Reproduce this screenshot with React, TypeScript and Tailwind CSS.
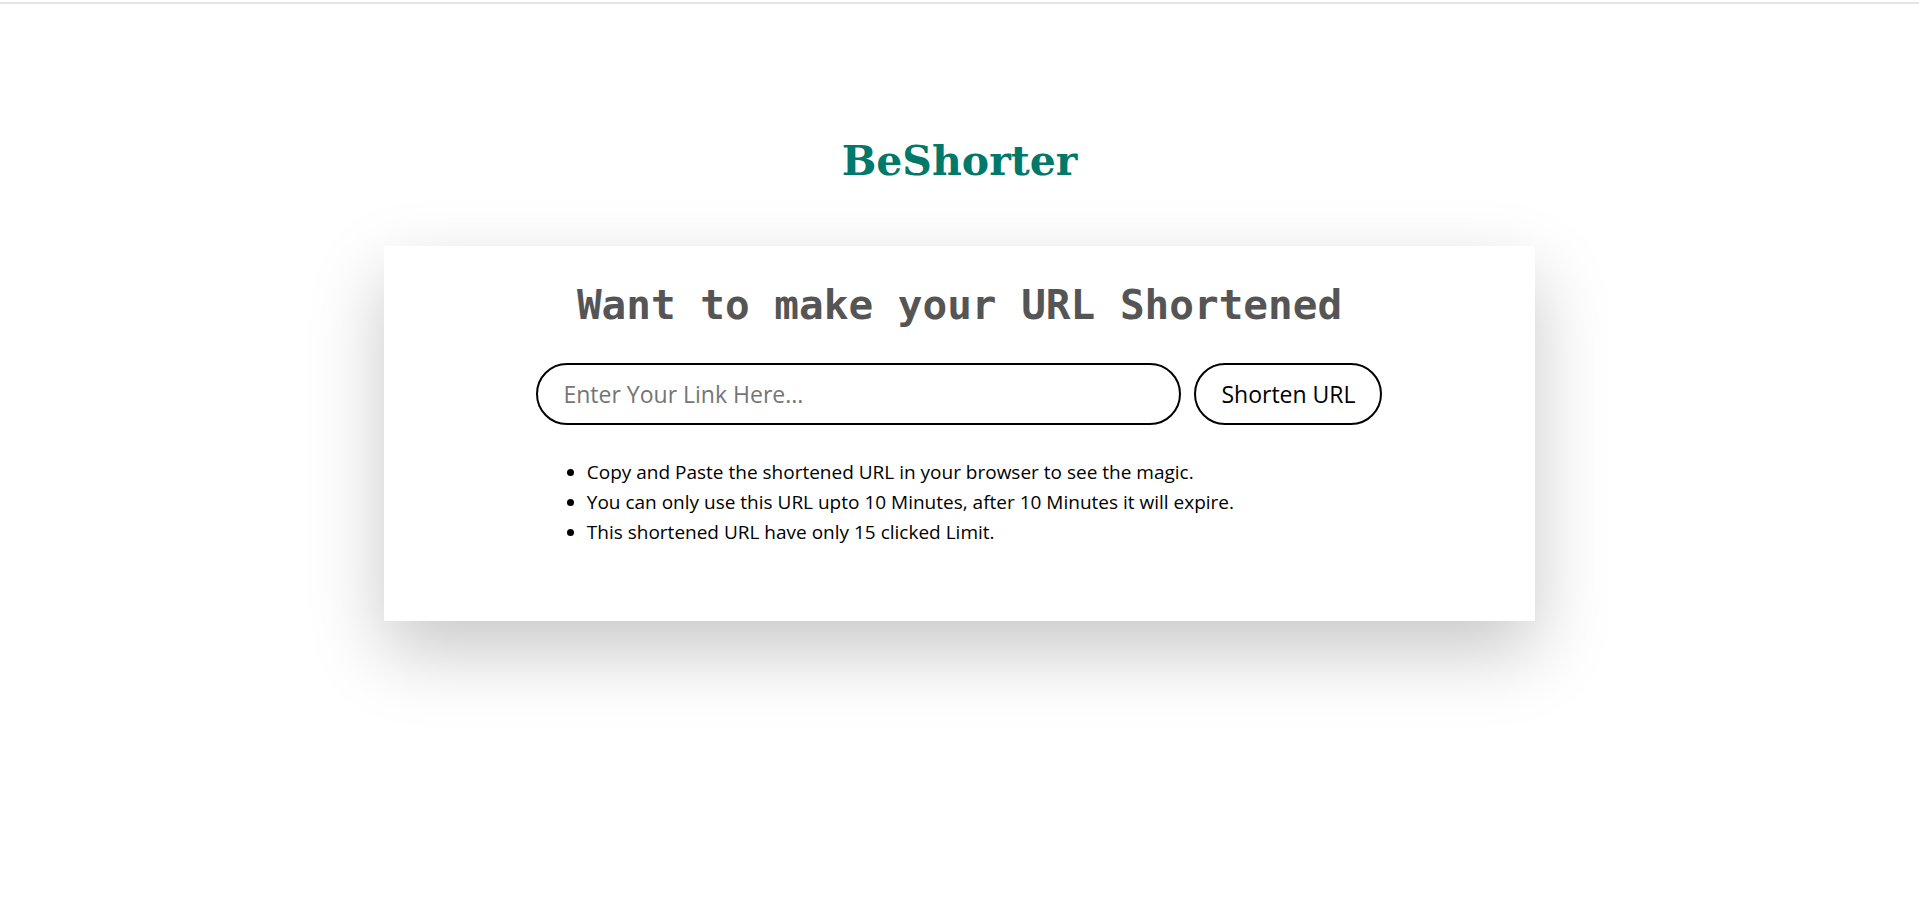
import { useState } from "react";

const tips = [
  "Copy and Paste the shortened URL in your browser to see the magic.",
  "You can only use this URL upto 10 Minutes, after 10 Minutes it will expire.",
  "This shortened URL have only 15 clicked Limit.",
];

export default function App() {
  const [link, setLink] = useState("");

  return (
    <div className="min-h-screen bg-white">
      {/* top rule */}
      <div className="pt-[2px]">
        <div className="h-[2px] bg-[#e3e3e3]" />
      </div>

      <h1 className="mt-[137px] text-center text-[41px] leading-none font-bold text-[#00796b] font-['DejaVu_Serif',serif]">
        BeShorter
      </h1>

      {/* Card */}
      <div className="mx-auto mt-[64px] w-[60%] bg-white pt-[39px] pb-[74px] shadow-[0_30px_70px_rgba(0,0,0,0.22)]">
        <h2 className="text-center text-[41px] leading-none font-bold text-[#555555] font-['DejaVu_Sans_Mono',monospace]">
          Want to make your URL Shortened
        </h2>

        <div className="mt-[37px] flex justify-center gap-[13px] font-['Open_Sans',sans-serif]">
          <input
            value={link}
            onChange={(e) => setLink(e.target.value)}
            placeholder="Enter Your Link Here..."
            className="h-[62px] w-[645px] rounded-full border-2 border-black px-[25px] text-[23px] text-black outline-none placeholder:text-[#757575]"
          />
          <button className="h-[62px] w-[188px] rounded-full border-2 border-black bg-white text-[23px] text-black">
            Shorten URL
          </button>
        </div>

        <ul className="mt-[32px] ml-[203px] list-disc list-outside pl-0 text-[19px] leading-[30px] text-black font-['Open_Sans',sans-serif]">
          {tips.map((t) => (
            <li key={t}>{t}</li>
          ))}
        </ul>
      </div>
    </div>
  );
}
